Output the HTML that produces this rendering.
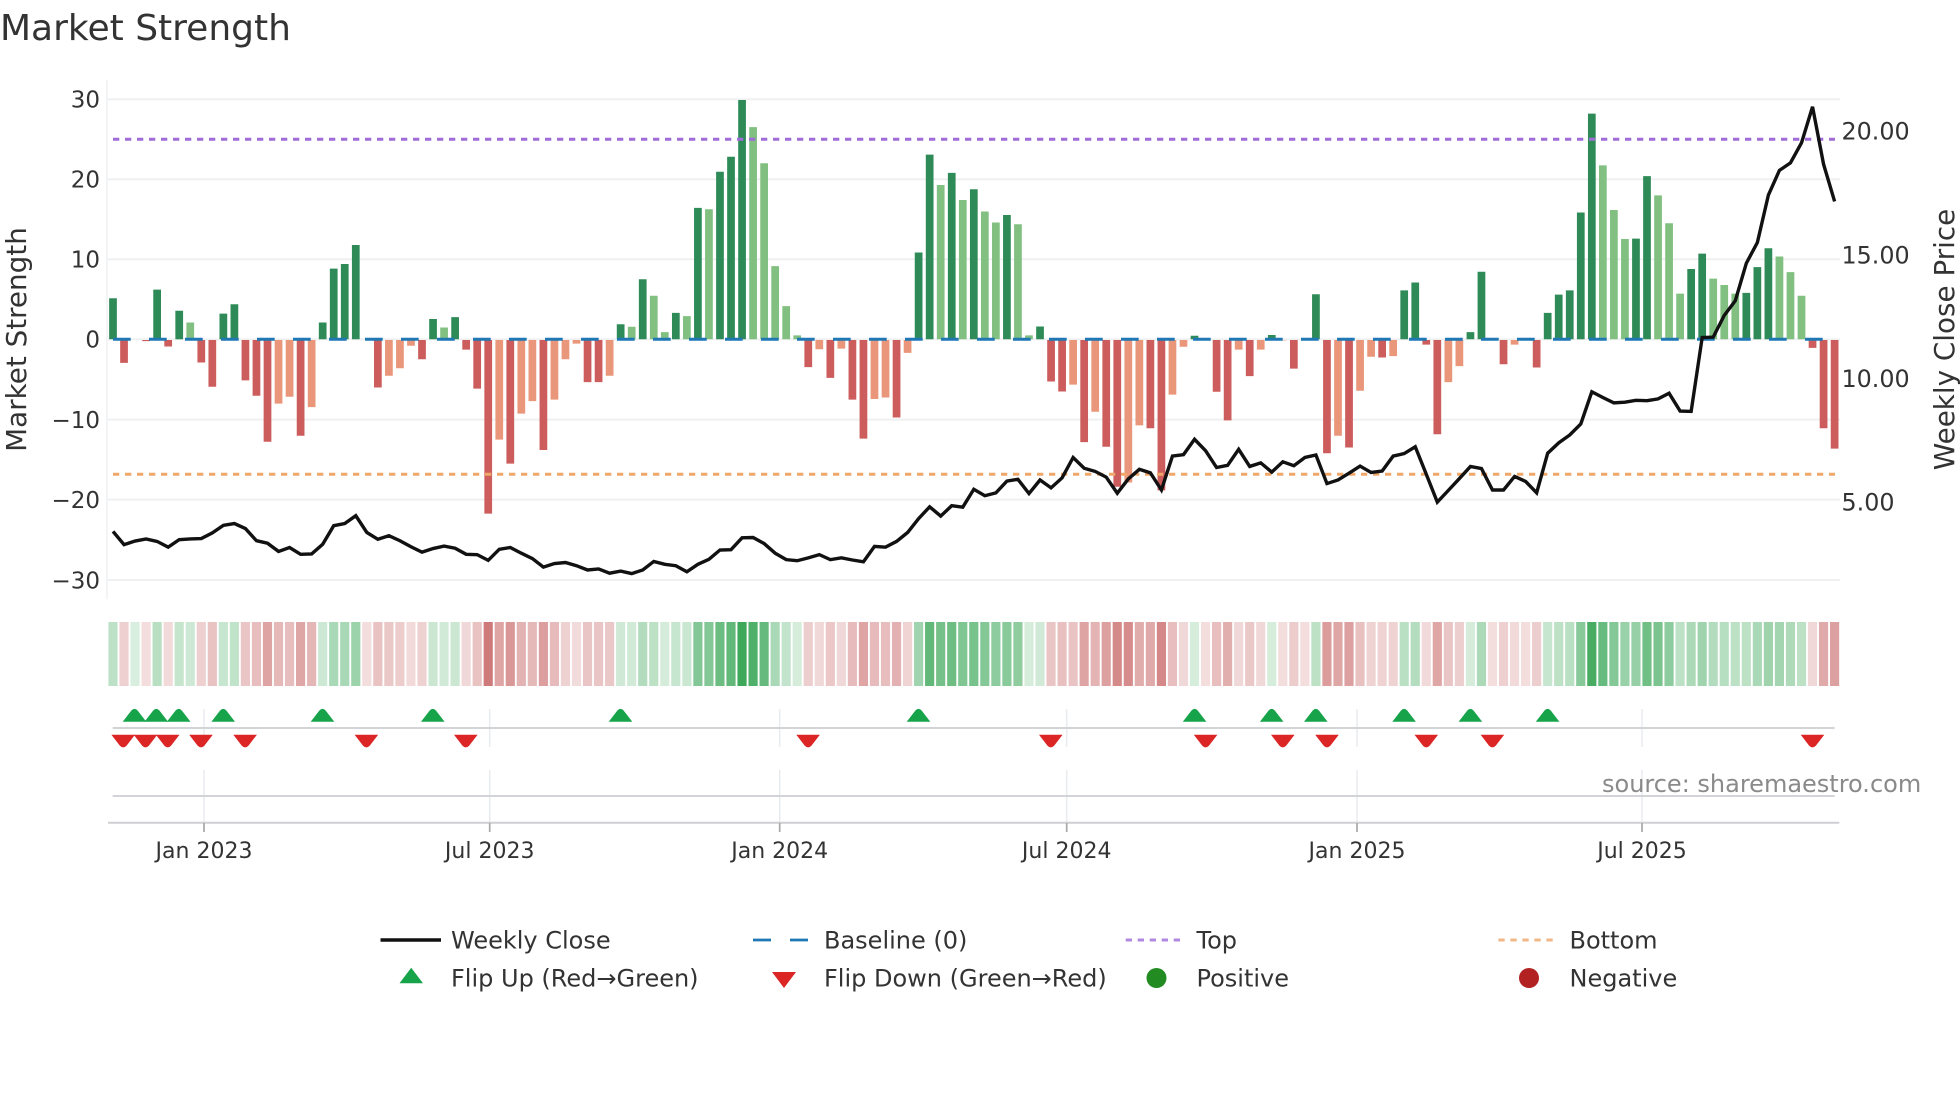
<!DOCTYPE html>
<html lang="en">
<head>
<meta charset="utf-8">
<title>Market Strength</title>
<style>
html,body{margin:0;padding:0;background:#fff;}
svg{display:block;}
text{font-family:"DejaVu Sans","Liberation Sans",sans-serif;fill:#333;}
.t{font-size:23px;}
.x{font-size:22px;text-anchor:middle;}
.r{font-size:23.8px;}
.a{font-size:27.8px;text-anchor:middle;}
.l{font-size:24px;}
.h rect{width:.83px;height:1px;}
</style>
</head>
<body>
<svg xmlns="http://www.w3.org/2000/svg" width="1960" height="1102" viewBox="0 0 1960 1102">
<rect width="1960" height="1102" fill="#fff"/>
<defs>
<path id="tu" d="M-11.8 721.7L-3.2 710.6Q0 707.2 3.2 710.6L11.8 721.7Z" fill="#16a34a"/>
<path id="td" d="M-11.8 734.7H11.8L3.4 745.6Q0 749.2 -3.4 745.6Z" fill="#dc2626"/>
</defs>

<text x="0" y="40" style="font-size:36px">Market Strength</text>

<!-- grid -->
<path d="M107 79.6V599.3" stroke="#eff0f2" stroke-width="1.5" fill="none"/>
<path d="M108 99.3H1840M108 179.3H1840M108 259.3H1840M108 339.3H1840M108 419.6H1840M108 499.6H1840M108 580H1840" stroke="#eff0f2" stroke-width="2" fill="none"/>

<!-- bars -->
<g transform="translate(113,339.3) scale(11.036,.35714)" fill="none" stroke-width=".7">
<path stroke="#2e8b57" d="M0 0V-115M4 0V-139M6 0V-80M10 0V-72M11 0V-98M19 0V-47M20 0V-198M21 0V-211M22 0V-264M29 0V-57M31 0V-62M46 0V-42M48 0V-168M51 0V-74M53 0V-368M55 0V-469M56 0V-511M57 0V-670M73 0V-243M74 0V-517M76 0V-466M78 0V-420M81 0V-348M84 0V-36M98 0V-10M105 0V-12M109 0V-126M117 0V-137M118 0V-159M123 0V-20M124 0V-189M130 0V-74M131 0V-125M132 0V-137M133 0V-355M134 0V-632M138 0V-282M139 0V-457M143 0V-197M144 0V-240M148 0V-130M149 0V-202M150 0V-255"/>
<path stroke="#81c081" d="M7 0V-47M30 0V-33M47 0V-35M49 0V-122M50 0V-20M52 0V-65M54 0V-364M58 0V-594M59 0V-493M60 0V-205M61 0V-93M62 0V-11M75 0V-432M77 0V-390M79 0V-358M80 0V-327M82 0V-322M83 0V-11M135 0V-487M136 0V-362M137 0V-281M140 0V-403M141 0V-325M142 0V-128M145 0V-170M146 0V-152M147 0V-128M151 0V-232M152 0V-188M153 0V-122"/>
<path stroke="#cd5c5c" d="M1 2V66M3 2V5M5 2V20M8 2V65M9 2V133M12 2V115M13 2V158M14 2V287M17 2V270M24 2V135M28 2V56M32 2V29M33 2V138M34 2V488M36 2V348M39 2V310M43 2V120M44 2V120M63 2V78M65 2V108M67 2V169M68 2V278M71 2V219M85 2V118M86 2V146M88 2V288M90 2V301M91 2V413M94 2V249M95 2V423M100 2V147M101 2V227M103 2V103M107 2V82M110 2V319M112 2V303M115 2V51M119 2V15M120 2V266M126 2V70M129 2V79M154 2V24M155 2V249M156 2V306"/>
<path stroke="#e9967a" d="M15 2V180M16 2V161M18 2V190M25 2V102M26 2V81M27 2V18M35 2V281M37 2V208M38 2V173M40 2V169M41 2V56M42 2V12M45 2V102M64 2V28M66 2V26M69 2V167M70 2V163M72 2V38M87 2V127M89 2V203M92 2V401M93 2V241M96 2V155M97 2V21M102 2V29M104 2V29M106 2V3M111 2V270M113 2V144M114 2V49M116 2V47M121 2V120M122 2V75M127 2V15"/>
</g>

<!-- reference lines -->
<path d="M113 339.3H1822.7" stroke="#1f77b4" stroke-width="3" stroke-dasharray="17.7 18.3" fill="none"/>
<path d="M113 139.3H1835" stroke="#9f6cd8" stroke-width="3" stroke-dasharray="6.3 5.7" fill="none"/>
<path d="M113 474.3H1835" stroke="#efa76a" stroke-width="3" stroke-dasharray="6.3 5.7" fill="none"/>

<!-- weekly close -->
<g transform="translate(113,60) scale(11.036,.35714)">
<polyline fill="none" stroke="#111" stroke-width="3.4" vector-effect="non-scaling-stroke" points="0,1320 1,1357 2,1347 3,1341 4,1348 5,1364 6,1343 7,1341 8,1340 9,1324 10,1303 11,1298 12,1312 13,1346 14,1353 15,1376 16,1365 17,1384 18,1383 19,1356 20,1304 21,1298 22,1276 23,1323 24,1342 25,1332 26,1346 27,1363 28,1378 29,1368 30,1361 31,1367 32,1384 33,1385 34,1401 35,1370 36,1365 37,1381 38,1396 39,1420 40,1410 41,1407 42,1416 43,1428 44,1425 45,1437 46,1431 47,1438 48,1428 49,1404 50,1412 51,1416 52,1433 53,1412 54,1398 55,1372 56,1371 57,1338 58,1337 59,1354 60,1381 61,1399 62,1402 63,1394 64,1385 65,1399 66,1394 67,1400 68,1405 69,1362 70,1364 71,1348 72,1323 73,1284 74,1251 75,1277 76,1248 77,1252 78,1202 79,1220 80,1212 81,1179 82,1174 83,1214 84,1176 85,1198 86,1170 87,1113 88,1143 89,1152 90,1168 91,1213 92,1173 93,1146 94,1156 95,1204 96,1109 97,1105 98,1062 99,1094 100,1141 101,1135 102,1090 103,1138 104,1128 105,1154 106,1125 107,1136 108,1113 109,1106 110,1186 111,1176 112,1157 113,1137 114,1155 115,1151 116,1109 117,1102 118,1083 119,1160 120,1238 121,1205 122,1172 123,1138 124,1144 125,1204 126,1204 127,1166 128,1180 129,1212 130,1101 131,1072 132,1050 133,1019 134,929 135,945 136,960 137,958 138,953 139,954 140,949 141,933 142,983 143,984 144,777 145,776 146,715 147,674 148,569 149,511 150,378 151,309 152,288 153,232 154,131 155,292 156,396"/>
</g>

<!-- y ticks -->
<g text-anchor="end">
<text class="t" x="100" y="107.7">30</text>
<text class="t" x="100" y="187.7">20</text>
<text class="t" x="100" y="267.7">10</text>
<text class="t" x="100" y="347.7">0</text>
<text class="t" x="100" y="428">−10</text>
<text class="t" x="100" y="508">−20</text>
<text class="t" x="100" y="588.4">−30</text>
</g>
<text class="a" transform="translate(26,339.5) rotate(-90)">Market Strength</text>

<text class="r" x="1841.5" y="139.4">20.00</text>
<text class="r" x="1841.5" y="263.6">15.00</text>
<text class="r" x="1841.5" y="386.8">10.00</text>
<text class="r" x="1841.5" y="510.7">5.00</text>
<text class="a" transform="translate(1954,339.5) rotate(-90)">Weekly Close Price</text>

<!-- heat strip -->
<g class="h" transform="translate(108.4,622) scale(11.036,64)" fill="#3ea85a">
<rect x="0" fill-opacity=".34"/><rect x="2" fill-opacity=".2"/><rect x="4" fill-opacity=".37"/><rect x="6" fill-opacity=".3"/><rect x="7" fill-opacity=".26"/><rect x="10" fill-opacity=".29"/><rect x="11" fill-opacity=".32"/><rect x="19" fill-opacity=".26"/><rect x="20" fill-opacity=".44"/><rect x="21" fill-opacity=".45"/><rect x="22" fill-opacity=".51"/><rect x="29" fill-opacity=".27"/><rect x="30" fill-opacity=".24"/><rect x="31" fill-opacity=".27"/><rect x="46" fill-opacity=".25"/><rect x="47" fill-opacity=".24"/><rect x="48" fill-opacity=".4"/><rect x="49" fill-opacity=".35"/><rect x="50" fill-opacity=".22"/><rect x="51" fill-opacity=".29"/><rect x="52" fill-opacity=".28"/><rect x="53" fill-opacity=".64"/><rect x="54" fill-opacity=".63"/><rect x="55" fill-opacity=".76"/><rect x="56" fill-opacity=".81"/><rect x="57" fill-opacity="1"/><rect x="58" fill-opacity=".91"/><rect x="59" fill-opacity=".79"/><rect x="60" fill-opacity=".44"/><rect x="61" fill-opacity=".31"/><rect x="62" fill-opacity=".21"/><rect x="73" fill-opacity=".49"/><rect x="74" fill-opacity=".82"/><rect x="75" fill-opacity=".71"/><rect x="76" fill-opacity=".75"/><rect x="77" fill-opacity=".66"/><rect x="78" fill-opacity=".7"/><rect x="79" fill-opacity=".63"/><rect x="80" fill-opacity=".59"/><rect x="81" fill-opacity=".61"/><rect x="82" fill-opacity=".58"/><rect x="83" fill-opacity=".21"/><rect x="84" fill-opacity=".24"/><rect x="98" fill-opacity=".21"/><rect x="105" fill-opacity=".21"/><rect x="109" fill-opacity=".35"/><rect x="117" fill-opacity=".36"/><rect x="118" fill-opacity=".39"/><rect x="123" fill-opacity=".22"/><rect x="124" fill-opacity=".43"/><rect x="130" fill-opacity=".29"/><rect x="131" fill-opacity=".35"/><rect x="132" fill-opacity=".36"/><rect x="133" fill-opacity=".62"/><rect x="134" fill-opacity=".95"/><rect x="135" fill-opacity=".78"/><rect x="136" fill-opacity=".63"/><rect x="137" fill-opacity=".53"/><rect x="138" fill-opacity=".54"/><rect x="139" fill-opacity=".74"/><rect x="140" fill-opacity=".68"/><rect x="141" fill-opacity=".59"/><rect x="142" fill-opacity=".35"/><rect x="143" fill-opacity=".43"/><rect x="144" fill-opacity=".49"/><rect x="145" fill-opacity=".4"/><rect x="146" fill-opacity=".38"/><rect x="147" fill-opacity=".35"/><rect x="148" fill-opacity=".35"/><rect x="149" fill-opacity=".44"/><rect x="150" fill-opacity=".5"/><rect x="151" fill-opacity=".48"/><rect x="152" fill-opacity=".42"/><rect x="153" fill-opacity=".35"/>
</g>
<g class="h" transform="translate(108.4,622) scale(11.036,64)" fill="#c25555">
<rect x="1" fill-opacity=".28"/><rect x="3" fill-opacity=".2"/><rect x="5" fill-opacity=".22"/><rect x="8" fill-opacity=".28"/><rect x="9" fill-opacity=".36"/><rect x="12" fill-opacity=".34"/><rect x="13" fill-opacity=".39"/><rect x="14" fill-opacity=".54"/><rect x="15" fill-opacity=".41"/><rect x="16" fill-opacity=".39"/><rect x="17" fill-opacity=".52"/><rect x="18" fill-opacity=".43"/><rect x="23" fill-opacity=".2"/><rect x="24" fill-opacity=".36"/><rect x="25" fill-opacity=".32"/><rect x="26" fill-opacity=".3"/><rect x="27" fill-opacity=".22"/><rect x="28" fill-opacity=".27"/><rect x="32" fill-opacity=".23"/><rect x="33" fill-opacity=".36"/><rect x="34" fill-opacity=".78"/><rect x="35" fill-opacity=".53"/><rect x="36" fill-opacity=".61"/><rect x="37" fill-opacity=".45"/><rect x="38" fill-opacity=".41"/><rect x="39" fill-opacity=".57"/><rect x="40" fill-opacity=".4"/><rect x="41" fill-opacity=".27"/><rect x="42" fill-opacity=".21"/><rect x="43" fill-opacity=".34"/><rect x="44" fill-opacity=".34"/><rect x="45" fill-opacity=".32"/><rect x="63" fill-opacity=".29"/><rect x="64" fill-opacity=".23"/><rect x="65" fill-opacity=".33"/><rect x="66" fill-opacity=".23"/><rect x="67" fill-opacity=".4"/><rect x="68" fill-opacity=".53"/><rect x="69" fill-opacity=".4"/><rect x="70" fill-opacity=".39"/><rect x="71" fill-opacity=".46"/><rect x="72" fill-opacity=".25"/><rect x="85" fill-opacity=".34"/><rect x="86" fill-opacity=".37"/><rect x="87" fill-opacity=".35"/><rect x="88" fill-opacity=".54"/><rect x="89" fill-opacity=".44"/><rect x="90" fill-opacity=".56"/><rect x="91" fill-opacity=".69"/><rect x="92" fill-opacity=".68"/><rect x="93" fill-opacity=".49"/><rect x="94" fill-opacity=".5"/><rect x="95" fill-opacity=".7"/><rect x="96" fill-opacity=".38"/><rect x="97" fill-opacity=".23"/><rect x="99" fill-opacity=".2"/><rect x="100" fill-opacity=".38"/><rect x="101" fill-opacity=".47"/><rect x="102" fill-opacity=".23"/><rect x="103" fill-opacity=".32"/><rect x="104" fill-opacity=".23"/><rect x="106" fill-opacity=".2"/><rect x="107" fill-opacity=".3"/><rect x="108" fill-opacity=".2"/><rect x="110" fill-opacity=".58"/><rect x="111" fill-opacity=".52"/><rect x="112" fill-opacity=".56"/><rect x="113" fill-opacity=".37"/><rect x="114" fill-opacity=".26"/><rect x="115" fill-opacity=".26"/><rect x="116" fill-opacity=".26"/><rect x="119" fill-opacity=".22"/><rect x="120" fill-opacity=".52"/><rect x="121" fill-opacity=".34"/><rect x="122" fill-opacity=".29"/><rect x="125" fill-opacity=".2"/><rect x="126" fill-opacity=".28"/><rect x="127" fill-opacity=".22"/><rect x="128" fill-opacity=".2"/><rect x="129" fill-opacity=".29"/><rect x="154" fill-opacity=".23"/><rect x="155" fill-opacity=".5"/><rect x="156" fill-opacity=".56"/>
</g>

<!-- lower panels -->
<path d="M204 709V747M204 770V823M489.7 709V747M489.7 770V823M779.7 709V747M779.7 770V823M1066.7 709V747M1066.7 770V823M1357 709V747M1357 770V823M1642 709V747M1642 770V823" stroke="#e9ecef" stroke-width="1.5" fill="none"/>
<path d="M112.7 728H1834.6M112.7 796H1834.6" stroke="#d3d4d8" stroke-width="2" fill="none"/>
<path d="M108 822.7H1839.3" stroke="#cfcfd3" stroke-width="2" fill="none"/>
<path d="M204 823V832M489.7 823V832M779.7 823V832M1066.7 823V832M1357 823V832M1642 823V832" stroke="#a8a8a8" stroke-width="1.7" fill="none"/>

<!-- flip markers -->
<use href="#tu" x="134.5"/><use href="#tu" x="156.3"/><use href="#tu" x="178.7"/><use href="#tu" x="223.2"/><use href="#tu" x="322.5"/><use href="#tu" x="432.8"/><use href="#tu" x="620.5"/><use href="#tu" x="918.5"/><use href="#tu" x="1194.6"/><use href="#tu" x="1271.7"/><use href="#tu" x="1315.8"/><use href="#tu" x="1404.1"/><use href="#tu" x="1470.4"/><use href="#tu" x="1547.6"/>
<use href="#td" x="123.2"/><use href="#td" x="145.5"/><use href="#td" x="167.7"/><use href="#td" x="201"/><use href="#td" x="245.1"/><use href="#td" x="366.4"/><use href="#td" x="465.8"/><use href="#td" x="808.1"/><use href="#td" x="1050.8"/><use href="#td" x="1205.6"/><use href="#td" x="1282.8"/><use href="#td" x="1327"/><use href="#td" x="1426.3"/><use href="#td" x="1492.4"/><use href="#td" x="1812.5"/>

<!-- x labels -->
<text class="x" x="204" y="858">Jan 2023</text>
<text class="x" x="489.7" y="858">Jul 2023</text>
<text class="x" x="779.7" y="858">Jan 2024</text>
<text class="x" x="1066.7" y="858">Jul 2024</text>
<text class="x" x="1357" y="858">Jan 2025</text>
<text class="x" x="1642" y="858">Jul 2025</text>

<text x="1602" y="792" style="font-size:24px;fill:#8a8a8a">source: sharemaestro.com</text>

<!-- legend -->
<path d="M380.5 940H441" stroke="#111" stroke-width="3.4" fill="none"/>
<text class="l" x="451" y="948.3">Weekly Close</text>
<path d="M753 940H808" stroke="#1f77b4" stroke-width="2.8" stroke-dasharray="18 19" fill="none"/>
<text class="l" x="824" y="948.3">Baseline (0)</text>
<path d="M1125.7 940H1181" stroke="#9f6cd8" stroke-width="3" stroke-opacity=".8" stroke-dasharray="6.3 5.7" fill="none"/>
<text class="l" x="1196.5" y="948.3">Top</text>
<path d="M1498.4 940H1554" stroke="#efa76a" stroke-width="3" stroke-opacity=".8" stroke-dasharray="6.3 5.7" fill="none"/>
<text class="l" x="1569.5" y="948.3">Bottom</text>

<path d="M399.5 983.3L411.2 967.7L423 983.3Z" fill="#16a34a"/>
<text class="l" x="451" y="986.7">Flip Up (Red→Green)</text>
<path d="M772 972H796L784 988Z" fill="#dc2626"/>
<text class="l" x="824" y="986.7">Flip Down (Green→Red)</text>
<circle cx="1156.5" cy="978" r="10" fill="#228b22"/>
<text class="l" x="1196.5" y="986.7">Positive</text>
<circle cx="1529" cy="978" r="10" fill="#b22222"/>
<text class="l" x="1569.5" y="986.7">Negative</text>
</svg>
</body>
</html>
